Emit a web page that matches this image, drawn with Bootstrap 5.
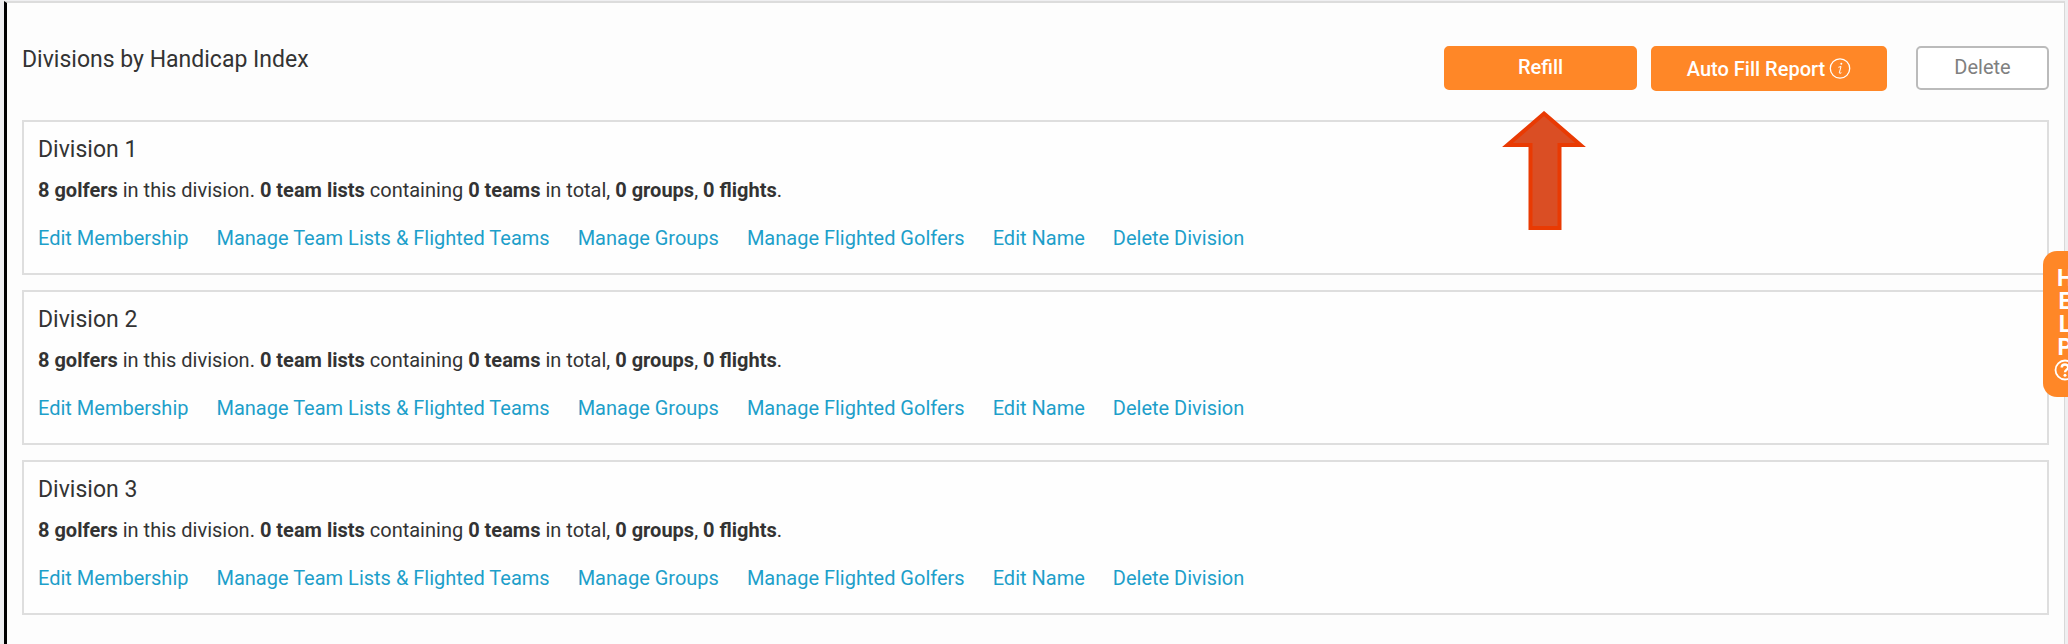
<!DOCTYPE html>
<html lang="en">
<head>
<meta charset="utf-8">
<meta name="viewport" content="width=device-width, initial-scale=1">
<title>Divisions by Handicap Index</title>
<link href="https://cdn.jsdelivr.net/npm/bootstrap@5.3.0/dist/css/bootstrap.min.css" rel="stylesheet">
<style>
  body { background: #efeff1; color: #333; font-family: Roboto, "Liberation Sans", sans-serif; font-size: 20px; line-height: 28px; }
  .page-frame { margin: 1px 3px 0 4px; border-top: 2px solid #dcdcdc; border-left: 3px solid #000; border-right: 1px solid #d8d8d8; background: #fdfdfd; padding: 43px 15px 28px; }
  .page-head { margin-bottom: 29px; }
  .page-head h1, .division h2 { font-size: 23px; line-height: 28px; font-weight: 400; }
  .action { height: 44px; padding: 0 16px 2px; border-radius: 5px; font-size: 20px; line-height: 28px; border-width: 2px; }
  .action-fill, .action-fill:hover { background: #ff8727; border-color: #ff8727; color: #fff; font-weight: 500; }
  .action-line { border-color: #bbb; color: #808080; background: #fff; width: 133px; margin-left: 29px; }
  .refill-width { width: 193px; }
  .refill-wrap { margin-right: 14px; }
  .report-width { width: 236px; height: 45px; padding-bottom: 0; }
  .pointer-arrow { top: 65px; left: 58px; z-index: 2; pointer-events: none; }
  .division-list { row-gap: 15px; }
  .division { border: 2px solid #dedede; padding: 14px 14px 21px; background: #fefefe; }
  .division h2 { margin-bottom: 12px; }
  .division p { margin-bottom: 20px; }
  .division a { color: #1d9fca; text-decoration: none; }
  .division-links { column-gap: 28px; }
  .help-tab { right: -19px; top: 251px; width: 44px; height: 146px; border: 0; border-radius: 14px; background: #ff8727; color: #fff; font-weight: 700; font-size: 23px; line-height: 23px; z-index: 3; padding: 0; }
</style>
</head>
<body>
<div class="position-relative overflow-hidden min-vh-100 d-flex flex-column">
  <main class="page-frame flex-grow-1">
    <header class="page-head d-flex align-items-start justify-content-between">
      <h1 class="mb-0">Divisions by Handicap Index</h1>
      <div class="d-flex align-items-start">
        <div class="refill-wrap position-relative">
          <button type="button" class="btn action action-fill refill-width">Refill</button>
          <svg class="pointer-arrow position-absolute" width="84" height="119" viewBox="0 0 84 119" aria-hidden="true">
            <path d="M42 2.600 78.500 34H57.500V117H28.500V34H5.500Z" fill="#da4e24" stroke="#e93a03" stroke-width="4"/>
          </svg>
        </div>
        <button type="button" class="btn action action-fill report-width d-flex align-items-center justify-content-center gap-1">Auto Fill Report
          <svg width="22" height="22" viewBox="0 0 22 22" fill="none" stroke="#fff" aria-hidden="true">
            <circle cx="11" cy="10.500" r="9.700" stroke-width="1.300"/>
            <circle cx="12.300" cy="5.800" r="1" fill="#fff" stroke="none"/>
            <path d="M9.400 9.300 12 8.500 10.300 14.900Q10.200 16 12.400 14.700" stroke-width="1"/>
          </svg>
        </button>
        <button type="button" class="btn action action-line">Delete</button>
      </div>
    </header>
    <div class="d-grid division-list">
      <section class="division">
        <h2>Division 1</h2>
        <p><strong>8 golfers</strong> in this division. <strong>0 team lists</strong> containing <strong>0 teams</strong> in total, <strong>0 groups</strong>, <strong>0 flights</strong>.</p>
        <nav class="division-links d-flex flex-wrap"><a href="#">Edit Membership</a><a href="#">Manage Team Lists &amp; Flighted Teams</a><a href="#">Manage Groups</a><a href="#">Manage Flighted Golfers</a><a href="#">Edit Name</a><a href="#">Delete Division</a></nav>
      </section>
      <section class="division">
        <h2>Division 2</h2>
        <p><strong>8 golfers</strong> in this division. <strong>0 team lists</strong> containing <strong>0 teams</strong> in total, <strong>0 groups</strong>, <strong>0 flights</strong>.</p>
        <nav class="division-links d-flex flex-wrap"><a href="#">Edit Membership</a><a href="#">Manage Team Lists &amp; Flighted Teams</a><a href="#">Manage Groups</a><a href="#">Manage Flighted Golfers</a><a href="#">Edit Name</a><a href="#">Delete Division</a></nav>
      </section>
      <section class="division">
        <h2>Division 3</h2>
        <p><strong>8 golfers</strong> in this division. <strong>0 team lists</strong> containing <strong>0 teams</strong> in total, <strong>0 groups</strong>, <strong>0 flights</strong>.</p>
        <nav class="division-links d-flex flex-wrap"><a href="#">Edit Membership</a><a href="#">Manage Team Lists &amp; Flighted Teams</a><a href="#">Manage Groups</a><a href="#">Manage Flighted Golfers</a><a href="#">Edit Name</a><a href="#">Delete Division</a></nav>
      </section>
    </div>
  </main>
  <button type="button" class="help-tab position-absolute">H<br>E<br>L<br>P<br>
    <svg class="d-block mx-auto" width="22" height="22" viewBox="0 0 22 22" fill="none" stroke="#fff" stroke-width="1.800" aria-hidden="true">
      <circle cx="11" cy="11" r="9.500"/>
      <path d="M7.700 8.600C7.700 4.500 14.300 4.600 14.200 8.400 14.200 10.600 11 10.700 11 13.300" stroke-width="2.400"/>
      <circle cx="11" cy="16.200" r="1.500" fill="#fff" stroke="none"/>
    </svg>
  </button>
</div>
<script src="https://cdn.jsdelivr.net/npm/bootstrap@5.3.0/dist/js/bootstrap.bundle.min.js"></script>
</body>
</html>
